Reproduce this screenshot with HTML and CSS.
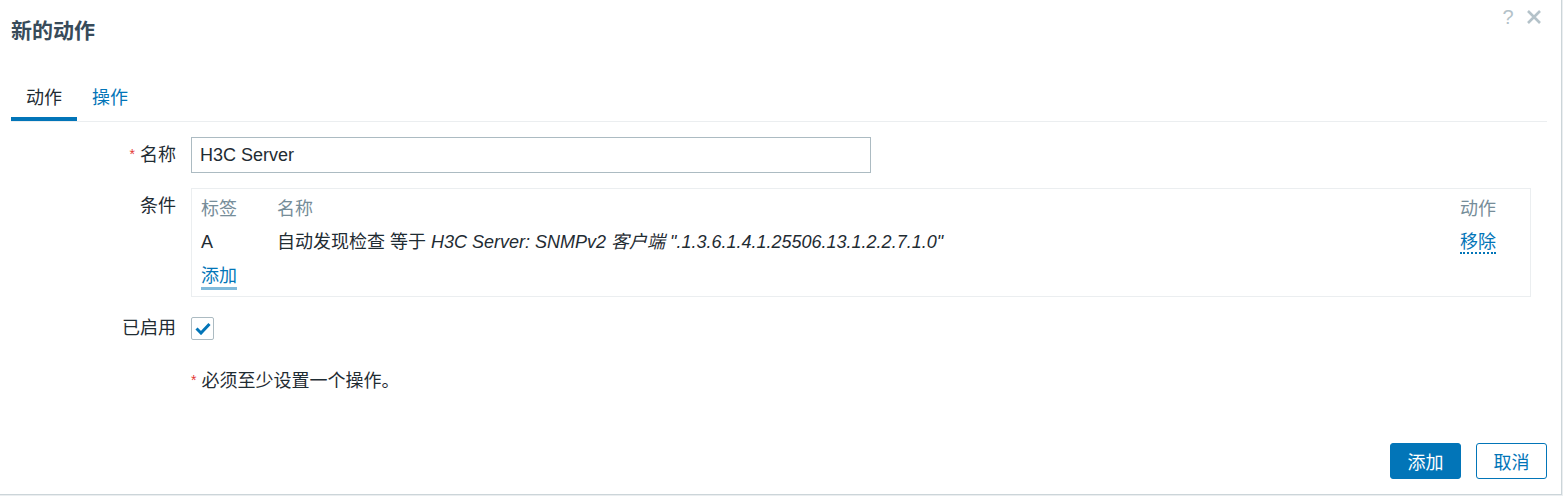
FILE: index.html
```html
<!DOCTYPE html>
<html lang="zh-CN">
<head>
<meta charset="utf-8">
<title>新的动作</title>
<link rel="stylesheet" href="styles.css">
</head>
<body>
<div class="dialog">
  <div class="dialog-header">
    <h4 class="dialog-title">新的动作</h4>
    <div class="header-tools">
      <span class="btn-help">?</span>
      <span class="btn-close">
        <svg width="16" height="16" viewBox="0 0 16 16"><path d="M2 2 L14 14 M14 2 L2 14" stroke="#b4c2c9" stroke-width="2.6" fill="none"/></svg>
      </span>
    </div>
  </div>

  <div class="dialog-body">
    <ul class="tabs">
      <li class="tab active">动作</li>
      <li class="tab">操作</li>
    </ul>

    <div class="form">
      <div class="form-row row-name">
        <label class="form-label"><span class="asterisk">*</span> 名称</label>
        <div class="form-field"><input class="text-input" type="text" value="H3C Server"></div>
      </div>

      <div class="form-row row-cond">
        <label class="form-label label-top">条件</label>
        <div class="form-field">
          <div class="cond-box">
            <div class="cond-row cond-head">
              <span class="c-label">标签</span>
              <span class="c-name">名称</span>
              <span class="c-act">动作</span>
            </div>
            <div class="cond-row">
              <span class="c-label">A</span>
              <span class="c-name">自动发现检查 等于 <em>H3C Server: SNMPv2 客户端 ".1.3.6.1.4.1.25506.13.1.2.2.7.1.0"</em></span>
              <span class="c-act"><a class="link-action">移除</a></span>
            </div>
            <div class="cond-row">
              <span class="c-label"><a class="link-add">添加</a></span>
            </div>
          </div>
        </div>
      </div>

      <div class="form-row row-enabled">
        <label class="form-label">已启用</label>
        <div class="form-field">
          <span class="checkbox">
            <svg width="16" height="13" viewBox="0 0 16 13"><path d="M1.5 6.5 L6 11 L14.5 2" stroke="#0275b8" stroke-width="3" fill="none"/></svg>
          </span>
        </div>
      </div>

      <div class="form-row row-note">
        <span class="form-label"></span>
        <div class="form-field note"><span class="asterisk">*</span> 必须至少设置一个操作。</div>
      </div>
    </div>
  </div>

  <div class="dialog-footer">
    <button class="btn btn-primary">添加</button>
    <button class="btn btn-alt">取消</button>
  </div>
</div>
</body>
</html>
```

FILE: styles.css
```css
html, body {
  margin: 0;
  padding: 0;
}
body {
  background: #ebeef0;
  font-family: "Liberation Sans", "Noto Sans CJK SC", sans-serif;
  font-size: 18px;
  color: #1f2c33;
  width: 1563px;
  height: 496px;
  overflow: hidden;
}
.dialog {
  width: 1562px;
  height: 495px;
  box-sizing: border-box;
  background: #fff;
  border-right: 1px solid #ccd5d9;
  border-bottom: 1px solid #ccd5d9;
  display: flex;
  flex-direction: column;
}
.dialog-header {
  display: flex;
  justify-content: space-between;
  align-items: flex-start;
  padding: 10px 0 0 11px;
  height: 52px;
}
.dialog-title {
  margin: 0;
  font-size: 21px;
  line-height: 42px;
  font-weight: bold;
  color: #384b5a;
}
.header-tools {
  display: flex;
  align-items: center;
  gap: 11px;
  margin-top: -1px;
  padding-right: 19px;
}
.btn-help {
  color: #b4c2c9;
  font-size: 20px;
  line-height: 16px;
  width: 14px;
  text-align: center;
}
.btn-close {
  display: flex;
  width: 16px;
  height: 16px;
}
.dialog-body {
  padding: 0 14px 0 11px;
  flex: 1;
}
.tabs {
  list-style: none;
  margin: 24px 0 0;
  padding: 0;
  display: flex;
  border-bottom: 1px solid #ebeef0;
}
.tab {
  padding: 0 15px 7px;
  line-height: 24px;
  border-bottom: 4px solid transparent;
  color: #0275b8;
}
.tab.active {
  color: #1f2c33;
  border-bottom-color: #0275b8;
}
.form {
  display: flex;
  flex-direction: column;
  padding-top: 15px;
}
.form-row {
  display: grid;
  grid-template-columns: 165px 1fr;
  column-gap: 15px;
  align-items: center;
}
.row-cond {
  margin-top: 15px;
  align-items: start;
}
.row-enabled {
  margin-top: 19px;
}
.row-note {
  margin-top: 29px;
}
.form-label {
  text-align: right;
  line-height: 24px;
}
.label-top {
  padding-top: 6px;
}
.asterisk {
  color: #e33734;
  font-size: 14px;
  vertical-align: top;
  position: relative;
  top: -1px;
}
.text-input {
  width: 680px;
  height: 36px;
  box-sizing: border-box;
  border: 1px solid #acbbc2;
  padding: 0 8px;
  font-family: inherit;
  font-size: 18px;
  color: #1f2c33;
  outline: none;
  display: block;
}
.cond-box {
  width: 1340px;
  box-sizing: border-box;
  border: 1px solid #ebeef0;
  padding: 3px 9px 5px;
}
.cond-row {
  display: grid;
  grid-template-columns: 76px 1fr 61px;
  height: 33px;
  align-items: center;
  line-height: 24px;
}
.cond-head {
  color: #768d99;
}
.c-act {
  white-space: nowrap;
}
em {
  font-style: italic;
}
.link-action {
  color: #0275b8;
  border-bottom: 2px dotted #0275b8;
}
.link-add {
  color: #0275b8;
  border-bottom: 3px solid rgba(2, 117, 184, 0.5);
  display: inline-block;
  line-height: 22px;
  position: relative;
  top: 2px;
}
.checkbox {
  width: 23px;
  height: 23px;
  box-sizing: border-box;
  border: 1px solid #acbbc2;
  border-radius: 2px;
  display: flex;
  align-items: center;
  justify-content: center;
}
.note {
  line-height: 24px;
}
.dialog-footer {
  display: flex;
  justify-content: flex-end;
  gap: 15px;
  padding: 0 14px 15px 0;
}
.btn {
  width: 71px;
  height: 36px;
  border-radius: 3px;
  font-family: inherit;
  font-size: 18px;
  padding: 0;
  cursor: pointer;
}
.btn-primary {
  background: #0275b8;
  border: 1px solid #0275b8;
  color: #fff;
}
.btn-alt {
  background: #fff;
  border: 1px solid #0275b8;
  color: #0275b8;
}
```
